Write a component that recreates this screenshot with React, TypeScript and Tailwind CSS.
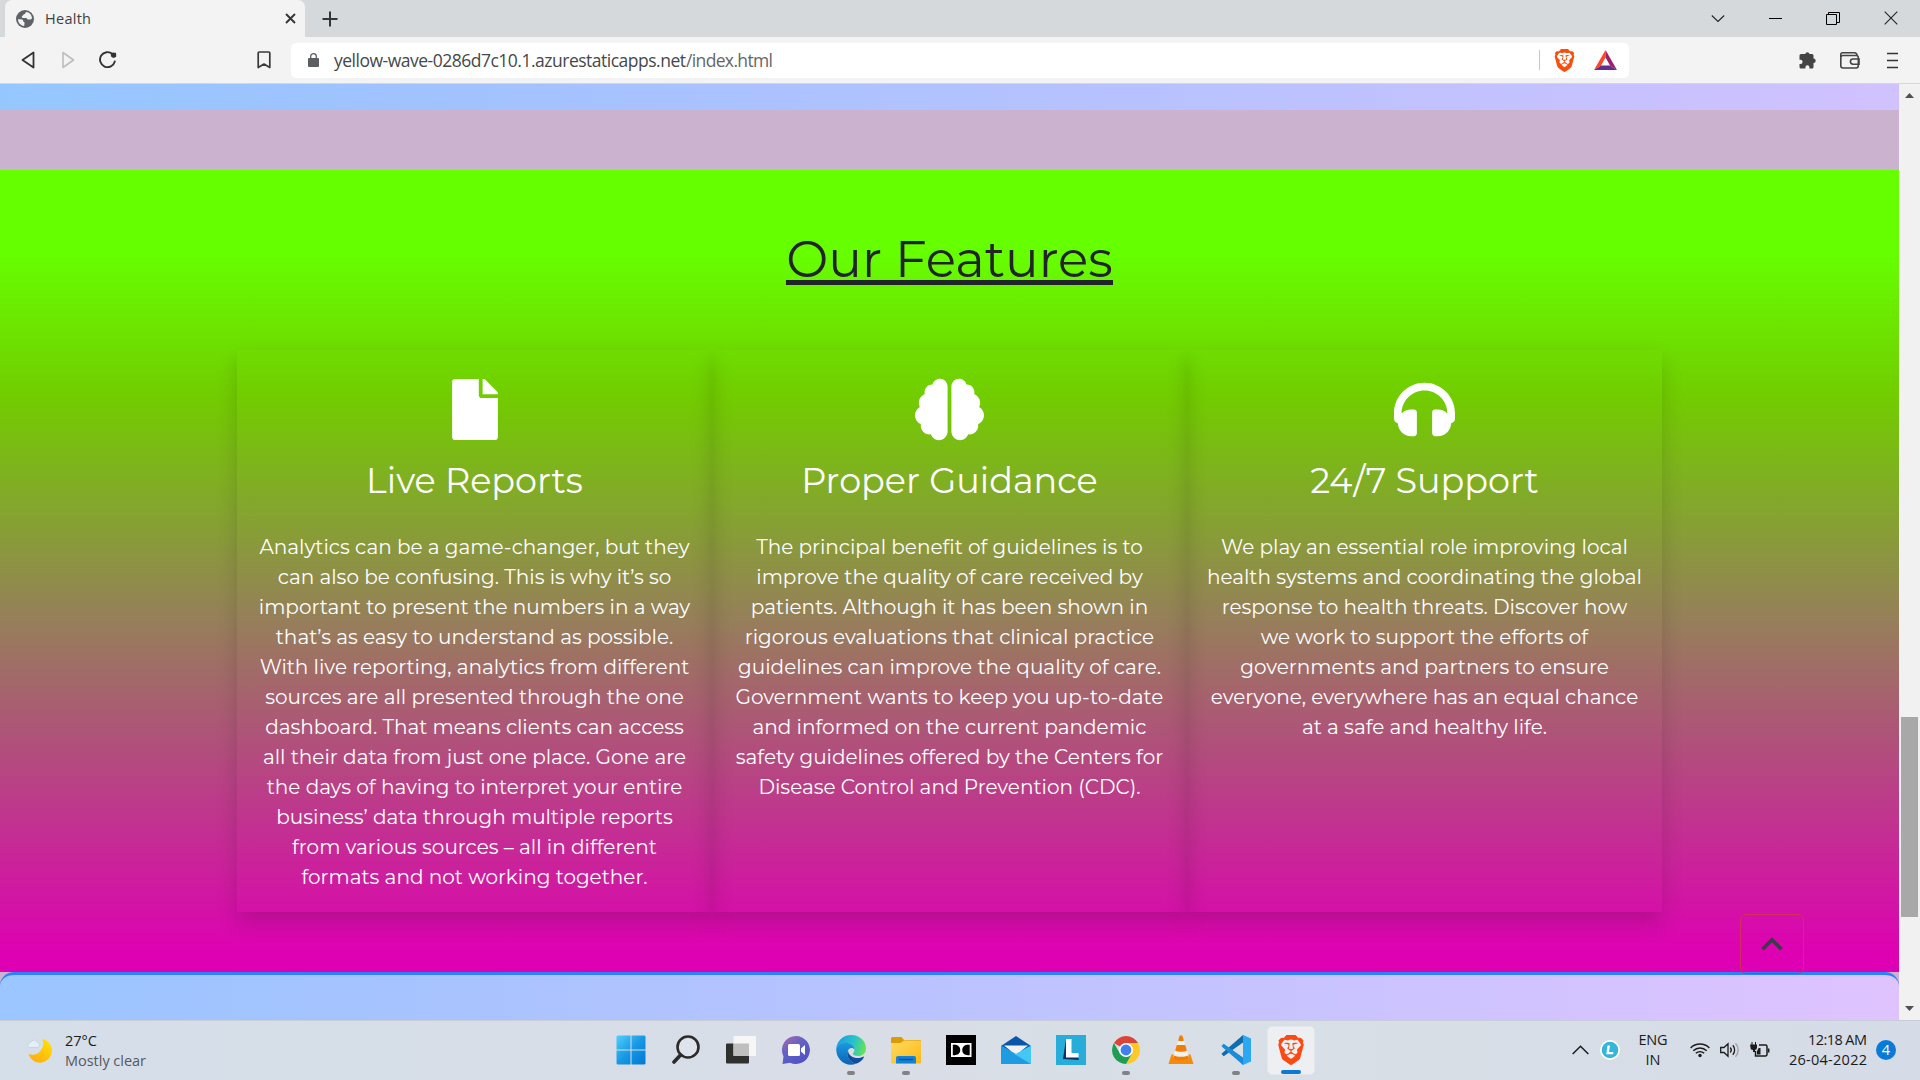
import React, { useLayoutEffect, useRef, useState } from "react";
import { FaBrain, FaFile, FaHeadphones } from "react-icons/fa";
import { SiBrave } from "react-icons/si";

/* A single line of text, tracked so that it spans the given width. */
function Line({ w, className = "", children }: { w: number; className?: string; children: string }) {
  const ref = useRef<HTMLSpanElement>(null);
  const [spacing, setSpacing] = useState(0);
  useLayoutEffect(() => {
    const el = ref.current;
    if (el) setSpacing((w - el.getBoundingClientRect().width) / Math.max(1, children.length - 1));
  }, []);
  return (
    <span className={`block whitespace-nowrap ${className}`} style={{ width: w }}>
      <span ref={ref} style={{ letterSpacing: spacing }}>{children}</span>
    </span>
  );
}

const ui = "font-['Segoe_UI','Open_Sans',sans-serif]";

type Feature = { icon: React.ReactNode; title: string; lines: string[] };

const features: Feature[] = [
  {
    icon: <FaFile className="h-[61px] w-[46px]" />,
    title: "Live Reports",
    lines: [
      "Analytics can be a game-changer, but they",
      "can also be confusing. This is why it’s so",
      "important to present the numbers in a way",
      "that’s as easy to understand as possible.",
      "With live reporting, analytics from different",
      "sources are all presented through the one",
      "dashboard. That means clients can access",
      "all their data from just one place. Gone are",
      "the days of having to interpret your entire",
      "business’ data through multiple reports",
      "from various sources – all in different",
      "formats and not working together.",
    ],
  },
  {
    icon: <FaBrain className="h-[69px] w-[69px]" />,
    title: "Proper Guidance",
    lines: [
      "The principal benefit of guidelines is to",
      "improve the quality of care received by",
      "patients. Although it has been shown in",
      "rigorous evaluations that clinical practice",
      "guidelines can improve the quality of care.",
      "Government wants to keep you up-to-date",
      "and informed on the current pandemic",
      "safety guidelines offered by the Centers for",
      "Disease Control and Prevention (CDC).",
    ],
  },
  {
    icon: <FaHeadphones className="h-[61px] w-[61px]" />,
    title: "24/7 Support",
    lines: [
      "We play an essential role improving local",
      "health systems and coordinating the global",
      "response to health threats. Discover how",
      "we work to support the efforts of",
      "governments and partners to ensure",
      "everyone, everywhere has an equal chance",
      "at a safe and healthy life.",
    ],
  },
];

function Card({ f }: { f: Feature }) {
  return (
    <div className="flex h-[562px] w-[475px] flex-col items-center pt-[29px] text-white shadow-[0_10px_20px_rgba(0,0,0,0.15)]">
      <div className="flex h-[61px] items-center">{f.icon}</div>
      <h3 className="mt-[19px] h-[44px] text-[35px] leading-[44px] font-normal whitespace-nowrap">{f.title}</h3>
      <div className="mt-[29px] flex flex-col items-center text-[20px] leading-[30px] whitespace-nowrap">
        {f.lines.map((t) => (
          <span key={t}>{t}</span>
        ))}
      </div>
    </div>
  );
}

function TabStrip() {
  return (
    <div className="flex h-[37px] items-start bg-[#d5d9dc] pl-[5px]">
      <div className="flex h-[37px] w-[300px] items-center rounded-t-[7px] bg-[#f3f3f3] pl-[11px]">
        <svg width="18" height="18" viewBox="0 0 18 18">
          <circle cx="9" cy="9" r="9" fill="#5f6368" />
          <path d="M10 2c-1 1-.5 2-2 2.300C6.800 4.600 7.200 6 6 6.300 5.300 6.500 6 8 7 8h3c1.200 0 1 1.500 2 1.500h2.500L16 8.500C16 5 13.500 2.200 10 2zM2 9.200c1.500.2 3.500-.2 4.500.6 1 .8.200 1.700 1.500 2.200 1.100.5.300 2 .2 3.900C4.500 15.600 2 12.500 2 9.200z" fill="#f3f3f3" />
        </svg>
        <Line w={46} className={`ml-[11px] text-[14.5px] text-[#3f4145] ${ui}`}>Health</Line>
        <svg className="ml-[194px]" width="11" height="11" viewBox="0 0 11 11" stroke="#333639" strokeWidth="1.900">
          <path d="M1 1l9 9M10 1l-9 9" />
        </svg>
      </div>
      <svg className="mt-[11px] ml-[17px]" width="16" height="16" viewBox="0 0 16 16" stroke="#333639" strokeWidth="2">
        <path d="M8 .5v15M.5 8h15" />
      </svg>
      <div className="ml-auto flex items-center gap-[44px] pt-[11px] pr-[22px]">
        <svg width="14" height="14" viewBox="0 0 14 14" fill="none" stroke="#222" strokeWidth="1.100"><path d="M.8 4.500L7 10.500 13.200 4.500" /></svg>
        <svg width="13" height="14" viewBox="0 0 13 14" stroke="#000"><path d="M0 7.500h13" /></svg>
        <svg width="14" height="14" viewBox="0 0 14 14" fill="none" stroke="#000"><path d="M.5 3.500h10v10H.5zM2.500 3V1.500h11v10H11" /></svg>
        <svg width="14" height="14" viewBox="0 0 14 14" stroke="#222" strokeWidth="1.100"><path d="M.7.700l12.600 12.600M13.300.7L.7 13.300" /></svg>
      </div>
    </div>
  );
}

function Toolbar() {
  return (
    <div className="flex h-[47px] items-center border-b border-[#d5d6d8] bg-[#f3f3f3]">
      <svg className="ml-[21px]" width="14" height="18" viewBox="0 0 14 18" fill="none" stroke="#333" strokeWidth="1.800" strokeLinejoin="round"><path d="M12.500 1.500v15L1.500 9z" /></svg>
      <svg className="ml-[27px]" width="14" height="18" viewBox="0 0 14 18" fill="none" stroke="#bdbdbd" strokeWidth="1.600" strokeLinejoin="round"><path d="M1 1.500v15L11.500 9z" /></svg>
      <svg className="ml-[23px]" width="18" height="18" viewBox="0 0 18 18" fill="none" stroke="#333" strokeWidth="1.900">
        <path d="M15.800 10.500A7.500 7.500 0 1 1 13.500 3" strokeLinecap="round" />
        <path d="M11.500 2.500l5.500-.8.200 4-3 1z" fill="#333" stroke="none" />
        <circle cx="14.500" cy="4" r="2.600" fill="#333" stroke="none" />
      </svg>
      <svg className="ml-[140px]" width="14" height="18" viewBox="0 0 14 18" fill="none" stroke="#3a3a3a" strokeWidth="1.700" strokeLinejoin="round"><path d="M1.200 2a1 1 0 0 1 1-1h9.600a1 1 0 0 1 1 1v14.500L7 13l-5.800 3.500z" /></svg>
      <div className="ml-[20px] flex h-[35px] w-[1338px] items-center rounded-[5px] bg-white">
        <svg className="ml-[17px]" width="11" height="14" viewBox="0 0 11 14">
          <rect x="0" y="5" width="11" height="9" rx="1" fill="#5b5e63" />
          <path d="M2.700 5.500V3.500a2.800 2.800 0 0 1 5.600 0v2" fill="none" stroke="#5b5e63" strokeWidth="1.300" />
        </svg>
        <div className={`ml-[15px] flex pt-px text-[17.5px] text-[#63666b] ${ui}`}>
          <Line w={352} className="text-[#45484c]">yellow-wave-0286d7c10.1.azurestaticapps.net</Line>
          <Line w={87}>/index.html</Line>
        </div>
        <div className="ml-[766px] h-[20px] w-px bg-[#c6c6c6]" />
        <SiBrave className="ml-[13px] text-[#f94f0b]" size={23} />
        <svg className="ml-[18px]" width="23" height="20" viewBox="0 0 23 20">
          <path d="M11.500 0L0 20l7-4.500 4.500-8z" fill="#ff4724" />
          <path d="M11.500 0L23 20l-7-4.500-4.500-8z" fill="#9e1f63" />
          <path d="M0 20h23l-7-4.500H7z" fill="#662d91" />
        </svg>
      </div>
      <svg className="ml-[168px]" width="20" height="20" viewBox="0 0 20 20" fill="#444">
        <path d="M6 4h2.200a2.300 2.300 0 0 1 4.400 0H15a1.500 1.500 0 0 1 1.500 1.500V8.500a2.200 2.200 0 0 1 0 4.400V17a1.500 1.500 0 0 1-1.500 1.500h-2.600v-1.200a2 2 0 0 0-4 0v1.200H4A1.500 1.500 0 0 1 2.500 17l0-3h1a2 2 0 0 0 0-4.200h-1V5.500A1.500 1.500 0 0 1 4 4z" />
      </svg>
      <svg className="ml-[23px]" width="20" height="17" viewBox="0 0 20 17" fill="none" stroke="#444" strokeWidth="1.600">
        <rect x=".8" y="3.500" width="17.500" height="12.500" rx="2.200" />
        <path d="M.8 5V2.500A1.700 1.700 0 0 1 2.500.800H14.500A2.500 2.500 0 0 1 17 3.500M19 7h-6a2.600 2.600 0 0 0 0 5.200h6z" />
      </svg>
      <svg className="ml-[27px]" width="11" height="17" viewBox="0 0 11 17" stroke="#333" strokeWidth="1.600"><path d="M0 1.500h11M0 8.500h11M0 15.500h11" /></svg>
    </div>
  );
}

function Scrollbar() {
  return (
    <div className="flex w-[21px] flex-col items-center justify-between bg-[#f1f1f1] py-[8px]">
      <svg width="9" height="6" viewBox="0 0 9 6" fill="#505050"><path d="M0 6L4.500 1 9 6z" /></svg>
      <div className="mt-[619px] h-[200px] w-[17px] bg-[#a8a8a8]" />
      <svg className="mt-auto" width="9" height="6" viewBox="0 0 9 6" fill="#505050"><path d="M0 0l4.500 5L9 0z" /></svg>
    </div>
  );
}

function TaskIcon({ name }: { name: string }) {
  switch (name) {
    case "start":
      return (
        <svg width="30" height="30" viewBox="0 0 30 30">
          <defs><linearGradient id="win" x1="0" y1="0" x2="1" y2="1"><stop offset="0" stopColor="#4fd0fb" /><stop offset=".5" stopColor="#1898e4" /><stop offset="1" stopColor="#0078d4" /></linearGradient></defs>
          <path d="M1.500.5H14.500V14.500H.500V1.500zM15.500.5H28.500l1 1V14.500h-14zM.5 15.500h14v14H1.500l-1-1zM15.500 15.500h14v13l-1 1h-13z" fill="url(#win)" />
        </svg>
      );
    case "search":
      return (
        <svg width="28" height="30" viewBox="0 0 28 30" fill="none" stroke="#2b2b2b">
          <circle cx="16" cy="12" r="10.500" strokeWidth="2.600" fill="#dfe4ec" />
          <path d="M8.500 20L2 27" strokeWidth="3.600" strokeLinecap="round" />
        </svg>
      );
    case "tasks":
      return (
        <svg width="30" height="30" viewBox="0 0 30 30">
          <rect y="8.500" width="23" height="20" rx="1" fill="#30302e" />
          <rect x="7.500" y="1" width="22.500" height="20" rx="1" fill="#f6f6f6" />
          <rect x="7.500" y="8.500" width="15.500" height="12.500" fill="#bfbfbf" />
        </svg>
      );
    case "chat":
      return (
        <svg width="30" height="30" viewBox="0 0 30 30">
          <defs><linearGradient id="chat" x1="0" y1="0" x2=".7" y2="1"><stop offset="0" stopColor="#a86ab0" /><stop offset=".5" stopColor="#6260c4" /><stop offset="1" stopColor="#4f52c4" /></linearGradient></defs>
          <path d="M15 1a14 14 0 1 1-6 26.700L1.500 29 2.500 21.500A14 14 0 0 1 15 1z" fill="url(#chat)" />
          <rect x="7" y="9" width="12" height="12" rx="1.500" fill="#fff" />
          <path d="M20 13.500l4-3.500v10l-4-3.500z" fill="#fff" />
        </svg>
      );
    case "edge":
      return (
        <svg width="30" height="30" viewBox="0 0 30 30">
          <defs>
            <linearGradient id="edge1" x1="0" y1=".3" x2="1" y2=".5"><stop offset="0" stopColor="#1b9de2" /><stop offset=".6" stopColor="#2cc3c8" /><stop offset="1" stopColor="#66e352" /></linearGradient>
            <linearGradient id="edge2" x1="0" y1="0" x2="0" y2="1"><stop offset="0" stopColor="#1b9ae0" /><stop offset="1" stopColor="#0c63b5" /></linearGradient>
          </defs>
          <path d="M.2 14C1 6 7 .1 15 .1c9 0 15 6.400 15 13.300 0 4.600-3.600 7.600-8 7.600-3.400 0-5.200-1.200-5.200-2.200 0-.7 1.600-1.500 1.600-4.100C18.400 10.500 14 8 9.500 8 5 8 1.500 10.500.2 14z" fill="url(#edge1)" />
          <path d="M.2 14C1.200 10.500 4.500 7.800 9.500 7.800c4.600 0 8.900 2.700 8.900 6.700-1-2-5-2.500-6.400 1C9.500 21 14 27.500 20 28.800 10 32.500 0 25 .2 14z" fill="url(#edge2)" />
          <path d="M12 15.500C9.300 20.500 14 28 20 28.800c3.500-1 6.500-3.500 7.900-6.500.3-.6-.2-1-.8-.6C21 25 12.500 22 12 15.500z" fill="#104f9d" />
        </svg>
      );
    case "files":
      return (
        <svg width="30" height="30" viewBox="0 0 30 30">
          <defs><linearGradient id="fold" x1="0" y1="0" x2="1" y2="1"><stop offset="0" stopColor="#ffdb62" /><stop offset="1" stopColor="#fbb813" /></linearGradient></defs>
          <path d="M0 3.500A1.500 1.500 0 0 1 1.500 2h9L13 5h16a1 1 0 0 1 1 1v4H0z" fill="#dd9a04" />
          <path d="M0 8h9.500L13 5.500h16a1 1 0 0 1 1 1V27a1.500 1.500 0 0 1-1.500 1.500h-27A1.500 1.500 0 0 1 0 27z" fill="url(#fold)" />
          <path d="M5 28.500V23a2 2 0 0 1 2-2h16a2 2 0 0 1 2 2v5.500z" fill="#1282d8" />
          <path d="M8 24.500h14" stroke="#0a4f95" strokeWidth="1.500" />
        </svg>
      );
    case "dolby":
      return (
        <svg width="30" height="30" viewBox="0 0 30 30">
          <rect width="30" height="30" />
          <rect x="5" y="8" width="20.500" height="14" fill="#fff" />
          <rect x="6.800" y="9.800" width="2" height="10.400" />
          <path d="M8 9.800c4.200 0 6.200 2 6.200 5.200S12.200 20.200 8 20.200zM22.500 9.800c-4.200 0-6.200 2-6.200 5.200s2 5.200 6.200 5.200z" />
          <rect x="21.700" y="9.800" width="2" height="10.400" />
        </svg>
      );
    case "mail":
      return (
        <svg width="30" height="30" viewBox="0 0 30 30">
          <path d="M0 11L15 1l15 10-5 5H5z" fill="#0a57a8" />
          <path d="M3 10.500h24L15 20z" fill="#f2f2f2" />
          <path d="M0 10.500l15 8.500L0 28.500z" fill="#2aa4e6" />
          <path d="M30 10.500L12 20.500 30 29z" fill="#43c8f5" />
          <path d="M0 29V11l30 18z" fill="#1f9be4" />
        </svg>
      );
    case "lens":
      return (
        <svg width="30" height="30" viewBox="0 0 30 30">
          <rect width="30" height="30" fill="#28addb" />
          <path d="M10 4L7 24l16 1-1-3H12z" fill="#12305f" />
          <path d="M10 4h5.500v14H22.500v4.500H10z" fill="#fff" />
        </svg>
      );
    case "chrome":
      return (
        <svg width="28" height="28" viewBox="0 0 28 28">
          <path d="M14 14L1.900 7A14 14 0 0 1 26.100 7z" fill="#dc4437" />
          <path d="M14 7h12.100A14 14 0 0 1 14 28l6-10.500z" fill="#fdc926" />
          <path d="M1.900 7A14 14 0 0 0 14 28l6-10.500-12 0z" fill="#1f9d55" />
          <circle cx="14" cy="14" r="7" fill="#fff" />
          <circle cx="14" cy="14" r="5.400" fill="#3f7ff0" />
        </svg>
      );
    case "vlc":
      return (
        <svg width="26" height="30" viewBox="0 0 26 30">
          <path d="M3.500 19.500h19L25.500 29H.500z" fill="#f58a0b" />
          <path d="M11.500 1.500h3L21 22c-2 3.500-14 3.500-16 0z" fill="#f0f0f0" />
          <path d="M11.500 1a2 2 0 0 1 3 0l1.400 4.500c-1 .8-4.800.8-5.800 0zM8.800 10h8.400l1.700 5.500c-2 1.700-9.800 1.700-11.800 0zM5.900 20.500c3 1.800 11.200 1.800 14.200 0L21 23c-2 3-14 3-16 0z" fill="#ef7d08" />
        </svg>
      );
    case "code":
      return (
        <svg width="30" height="30" viewBox="0 0 30 30">
          <path d="M.5 19l2.200 2.200L22 7.500V0L1 18.200z" fill="#0f6cb0" />
          <path d="M.5 11l2.200-2.200L22 22.500V30L1 11.800z" fill="#1c8ad6" />
          <path d="M20.500 0.300L22 0l8 3.500v23L22 30l-1.500-.3c1 0 1.500-.7 1.500-1.700V2c0-1-.5-1.700-1.500-1.700z" fill="#2aa8f2" />
        </svg>
      );
    default:
      return <SiBrave className="text-[#fb4a12]" size={30} />;
  }
}

const apps: [string, boolean][] = [
  ["start", false], ["search", false], ["tasks", false], ["chat", false], ["edge", true], ["files", true], ["dolby", false],
  ["mail", false], ["lens", false], ["chrome", true], ["vlc", false], ["code", true],
];

function Taskbar() {
  return (
    <div className={`flex h-[60px] border-t border-[#c9cdd8] bg-[linear-gradient(90deg,#d5dfe9,#d8dde7_40%,#d9dfe6_65%,#d5dce7)] text-[14.5px] text-[#1b1b1b] ${ui}`}>
      <div className="flex w-[603px] shrink-0 items-start pl-[27px]">
        <svg className="mt-[17px]" width="26" height="26" viewBox="0 0 26 26">
          <defs><linearGradient id="moon" x1="1" y1="0" x2=".3" y2="1"><stop offset="0" stopColor="#ffe600" /><stop offset="1" stopColor="#ffae12" /></linearGradient></defs>
          <path d="M15 .8A12 12 0 1 1 1.500 16 11 11 0 0 0 15 .8z" fill="url(#moon)" />
          <path d="M3 9.500a2.500 2.500 0 0 1 .5-5A3.500 3.500 0 0 1 10 4a2.800 2.800 0 0 1 .5 5.500z" fill="#e4eef6" stroke="#b9cad8" strokeWidth=".6" />
        </svg>
        <div className="mt-[10px] ml-[12px] leading-[20px]">
          <Line w={32}>27°C</Line>
          <Line w={81} className="text-[#55585d]">Mostly clear</Line>
        </div>
      </div>
      {apps.map(([name, running]) => (
        <div key={name} className="flex w-[55px] flex-col items-center pt-[14px]">
          <div className="flex h-[30px] items-center"><TaskIcon name={name} /></div>
          {running && <div className="mt-[6px] h-[4px] w-[8px] rounded-full bg-[#808286]" />}
        </div>
      ))}
      <div className="mt-[5px] ml-[4px] flex h-[49px] w-[48px] flex-col items-center rounded-[5px] border border-[#e3e6eb] bg-[#edeff3] pt-[8px]">
        <TaskIcon name="brave" />
        <div className="mt-[5px] h-[4px] w-[20px] rounded-full bg-[#0a7ad8]" />
      </div>
      <div className="ml-auto flex h-[58px] items-center pr-[24px]">
        <svg width="17" height="10" viewBox="0 0 17 10" fill="none" stroke="#1b1b1b" strokeWidth="1.500"><path d="M.7 9L8.500 1.200 16.300 9" /></svg>
        <svg className="ml-[11px]" width="20" height="20" viewBox="0 0 20 20">
          <circle cx="10" cy="10" r="10" fill="#fff" /><circle cx="10" cy="10" r="8.300" fill="#35b5da" />
          <path d="M7.500 5.500h2.500l-1 6.500h4.500l-.5 2.200H6.300z" fill="#fff" />
        </svg>
        <div className="ml-[18px] flex w-[30px] flex-col items-center leading-[20px]">
          <Line w={29}>ENG</Line>
          <Line w={15}>IN</Line>
        </div>
        <svg className="ml-[22px]" width="20" height="16" viewBox="0 0 20 16" fill="none" stroke="#1b1b1b" strokeWidth="1.400">
          <path d="M.6 6a13.200 13.200 0 0 1 18.800 0M3.300 8.700a9.500 9.500 0 0 1 13.400 0M5.800 11.300a6 6 0 0 1 8.400 0" />
          <circle cx="10" cy="13.500" r="1.700" fill="#1b1b1b" stroke="none" />
        </svg>
        <svg className="ml-[10px]" width="20" height="16" viewBox="0 0 20 16" fill="none" stroke="#1b1b1b" strokeWidth="1.300">
          <path d="M.7 5.500H4L8 1.800v12.400L4 10.500H.7zM10.300 5.500a4 4 0 0 1 0 5M12.800 3.300a7 7 0 0 1 0 9.400" />
          <path d="M15.500 1.200a10 10 0 0 1 0 13.600" stroke="#9da2aa" />
        </svg>
        <svg className="ml-[10px]" width="20" height="16" viewBox="0 0 20 16" fill="none" stroke="#1b1b1b" strokeWidth="1.500">
          <path d="M9 3h6.500A1.500 1.500 0 0 1 17 4.500v8a1.500 1.500 0 0 1-1.500 1.500H5.500V9M18.700 6.500v4" />
          <path d="M7 12.500V9l2-3.500V6h1.500v6.500zM0 2.500h7V5.500a2.500 2.500 0 0 1-2 2.500V10H3V8A2.500 2.500 0 0 1 .500 5.500zM1.500 0h1v3h-1zM5 0h1v3H5z" fill="#1b1b1b" stroke="none" />
        </svg>
        <div className="ml-[19px] flex w-[78px] flex-col items-end leading-[20px]">
          <Line w={59}>12:18 AM</Line>
          <Line w={78}>26-04-2022</Line>
        </div>
        <div className="ml-[9px] flex size-[20px] items-center justify-center rounded-full bg-[#0a7ad8] text-[14.5px] text-white">4</div>
      </div>
    </div>
  );
}

export default function App() {
  return (
    <div className="flex h-[1080px] w-[1920px] flex-col overflow-hidden">
      <TabStrip />
      <Toolbar />
      <div className="flex h-[936px]">
        <div className="relative flex w-[1899px] flex-col overflow-hidden bg-[#cbb2cf] font-['Montserrat','Inter',sans-serif]">
          <div className="h-[26px] shrink-0 bg-[linear-gradient(90deg,#95c7ff,#a0c2ff_22%,#d1c1ff)]" />
          <section className="mt-[60px] flex h-[802px] shrink-0 flex-col items-center bg-[linear-gradient(180deg,#66ff00_0px,#66ff00_82px,#72cc00_227px,#967f5a_450px,#de00b3_785px)]">
            <h2 className="mt-[62px] h-[53px] border-b-[5px] border-[#212529] text-[50px] leading-[56px] font-normal whitespace-nowrap text-[#212529]">
              Our Features
            </h2>
            <div className="mt-[65px] flex">
              {features.map((f) => <Card key={f.title} f={f} />)}
            </div>
          </section>
          <div className="h-[100px] shrink-0 rounded-[14px] border-t-[3px] border-[#2f80ff] bg-[linear-gradient(90deg,#9bc6ff,#a6c3ff_20%,#dfc3ff)]" />
          <button className="absolute top-[830px] left-[1740px] flex h-[60px] w-[64px] items-center justify-center rounded-[6px] border border-[#d0305a]">
            <svg width="22" height="14" viewBox="0 0 22 14" fill="none" stroke="#3c3a48" strokeWidth="3.600"><path d="M1.500 12.200L11 2.700l9.500 9.500" /></svg>
          </button>
        </div>
        <Scrollbar />
      </div>
      <Taskbar />
    </div>
  );
}
